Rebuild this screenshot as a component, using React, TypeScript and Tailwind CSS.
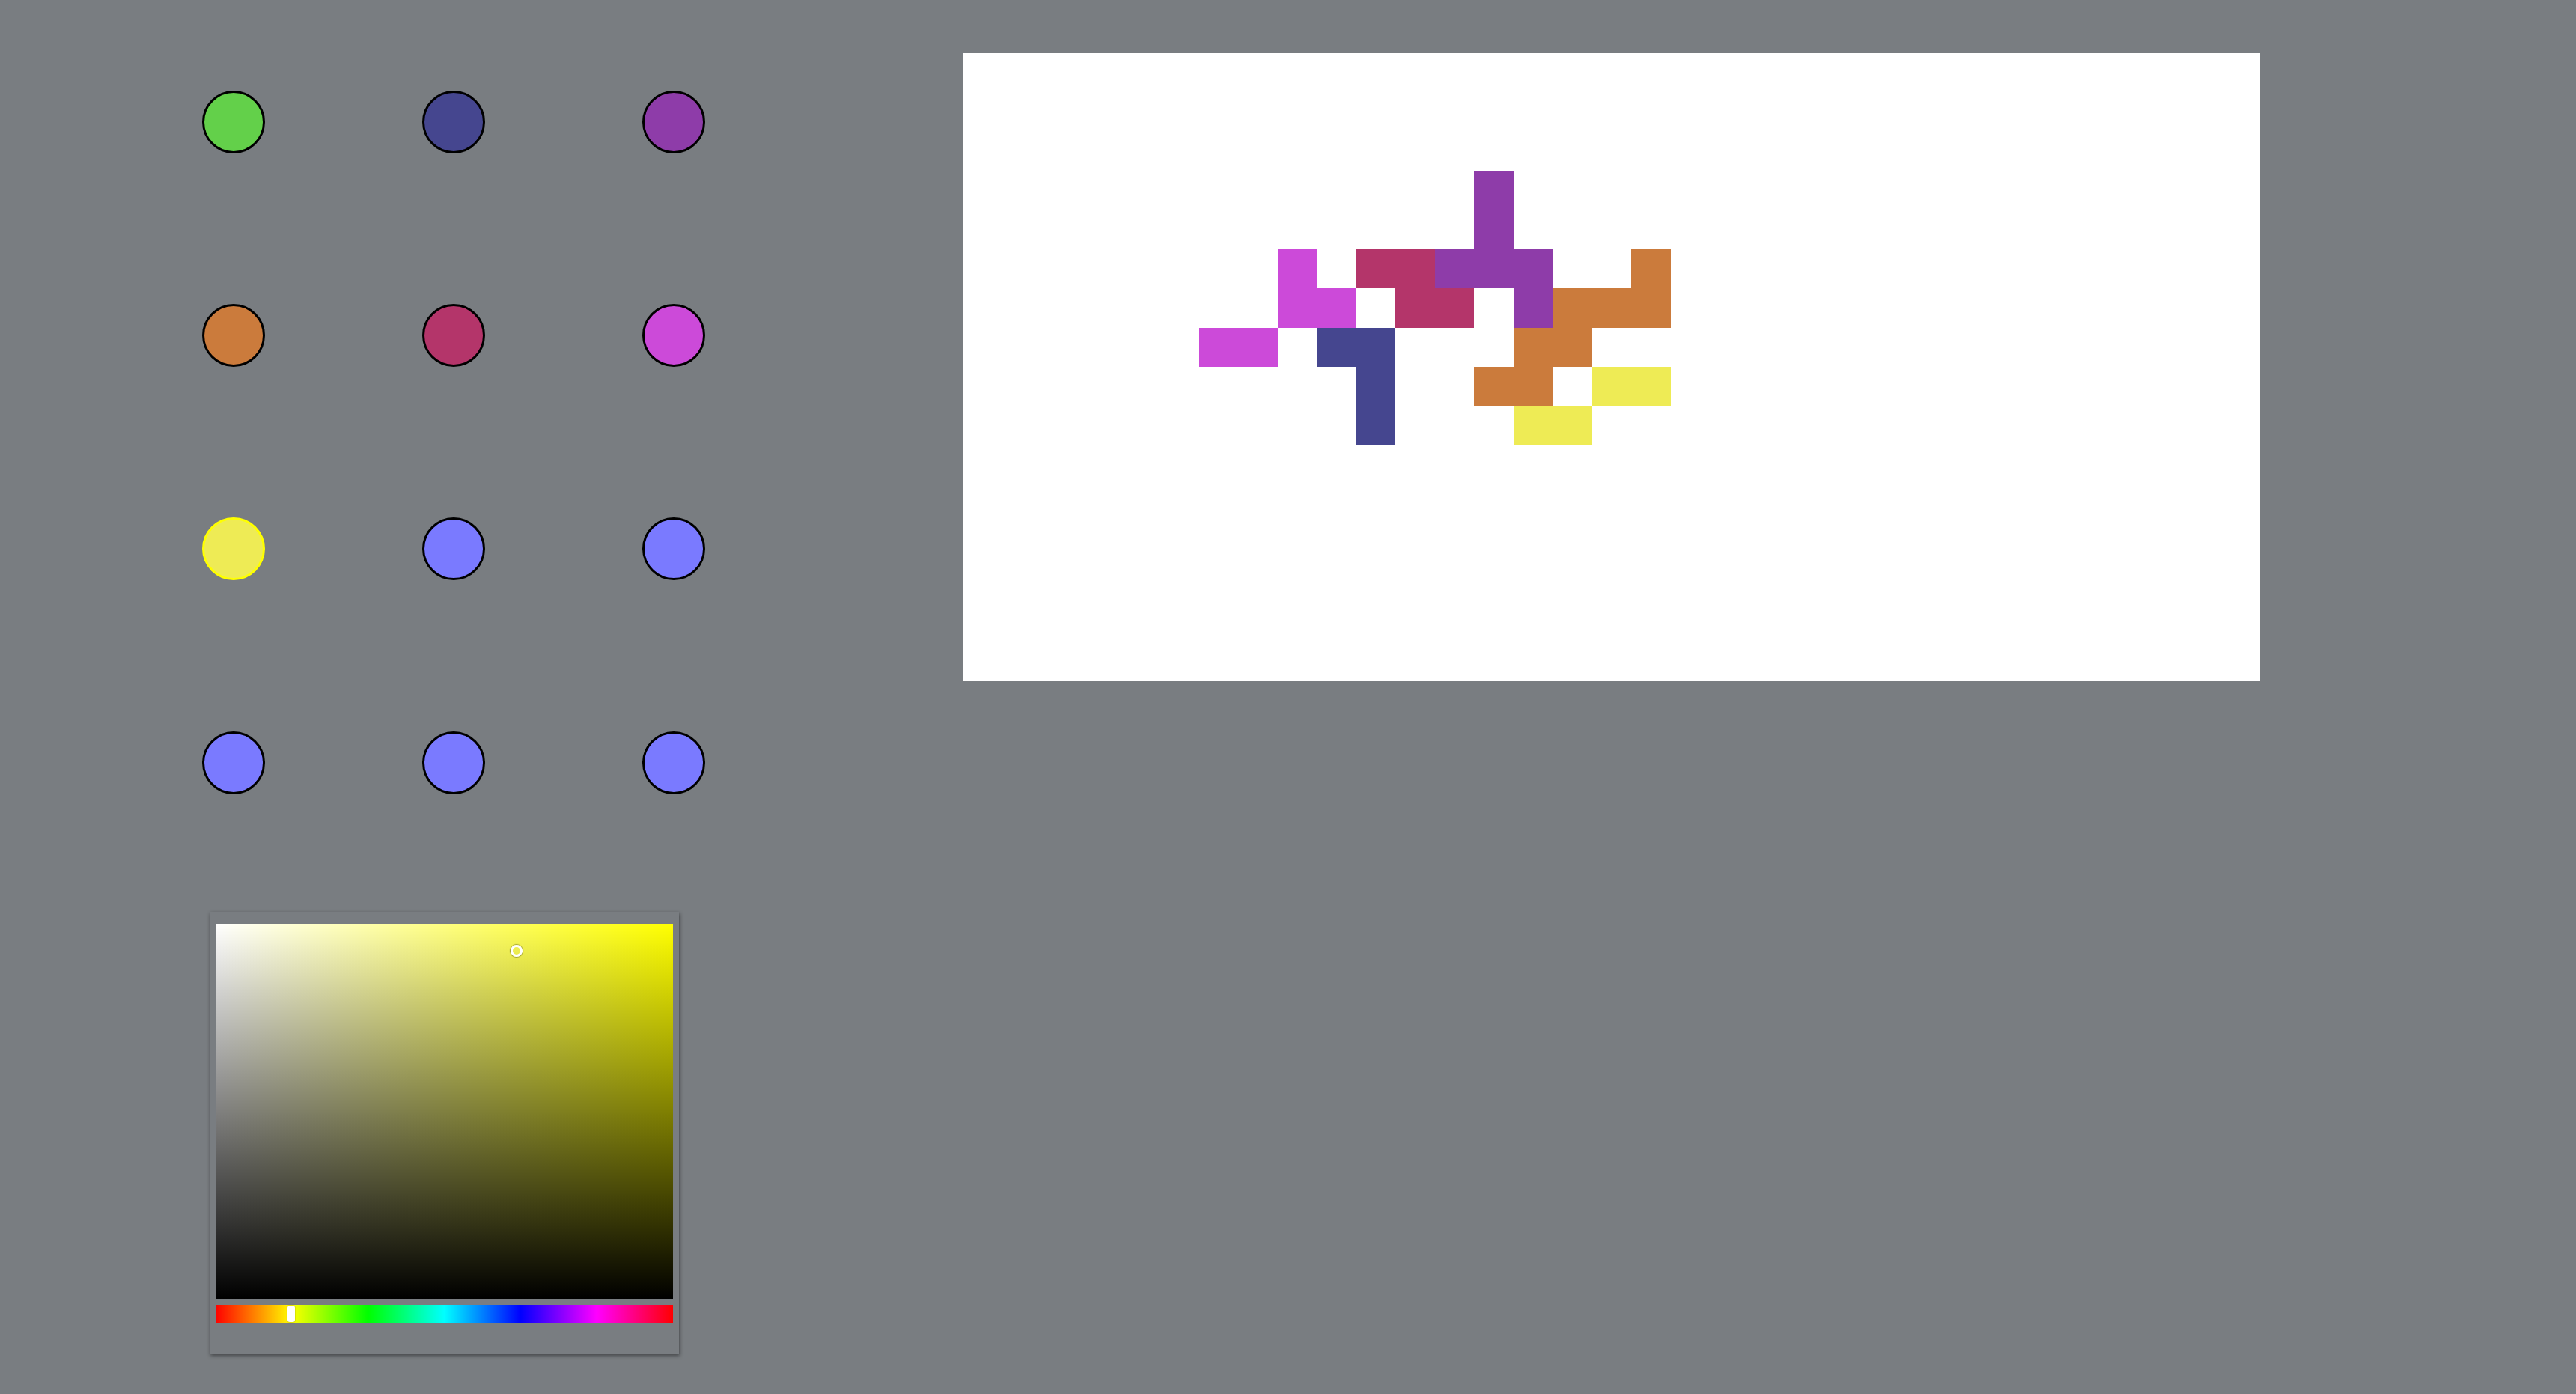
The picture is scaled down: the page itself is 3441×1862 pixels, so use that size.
const palette = [
  { color: "bg-[#63d04a]", selected: false },
  { color: "bg-[#45468f]", selected: false },
  { color: "bg-[#8e3ca9]", selected: false },
  { color: "bg-[#cb7b3c]", selected: false },
  { color: "bg-[#b4356a]", selected: false },
  { color: "bg-[#cc4ad9]", selected: false },
  { color: "bg-[#eeeb55]", selected: true },
  { color: "bg-[#7a7aff]", selected: false },
  { color: "bg-[#7a7aff]", selected: false },
  { color: "bg-[#7a7aff]", selected: false },
  { color: "bg-[#7a7aff]", selected: false },
  { color: "bg-[#7a7aff]", selected: false },
];

const COLS = 33;
const ROWS = 16;

// painted cells on the canvas, [col, row]
const pieces: { color: string; cells: [number, number][] }[] = [
  {
    color: "bg-[#8e3ca9]",
    cells: [[13, 3], [13, 4], [12, 5], [13, 5], [14, 5], [14, 6]],
  },
  {
    color: "bg-[#b4356a]",
    cells: [[10, 5], [11, 5], [11, 6], [12, 6]],
  },
  {
    color: "bg-[#cc4ad9]",
    cells: [[8, 5], [8, 6], [9, 6], [6, 7], [7, 7]],
  },
  {
    color: "bg-[#45468f]",
    cells: [[9, 7], [10, 7], [10, 8], [10, 9]],
  },
  {
    color: "bg-[#cb7b3c]",
    cells: [[17, 5], [15, 6], [16, 6], [17, 6], [14, 7], [15, 7], [13, 8], [14, 8]],
  },
  {
    color: "bg-[#eeeb55]",
    cells: [[16, 8], [17, 8], [14, 9], [15, 9]],
  },
];

const cellColor = new Map<string, string>();
pieces.forEach((p) => p.cells.forEach(([c, r]) => cellColor.set(`${c}-${r}`, p.color)));

function Swatch({ color, selected }: { color: string; selected: boolean }) {
  return (
    <div className="flex items-center justify-center">
      <div
        className={`w-[84px] h-[84px] rounded-full border-[3px] ${color} ${
          selected ? "border-[#ffff00]" : "border-black"
        }`}
      />
    </div>
  );
}

function ColorPicker() {
  return (
    <div className="w-[627px] h-[591px] bg-[#797d81] shadow-[1px_2px_5px_rgba(0,0,0,0.45)] px-[8px] pt-[16px]">
      <div className="relative w-[611px] h-[501px] bg-[linear-gradient(to_right,#ffffff,#ffff00)]">
        <div className="absolute inset-0 bg-[linear-gradient(to_top,#000000,rgba(0,0,0,0))]" />
        <div className="absolute left-[394px] top-[28px] w-[16px] h-[16px] rounded-full border-[3px] border-white shadow-[0_0_1px_1px_rgba(0,0,0,0.35)]" />
      </div>
      <div className="relative mt-[8px] w-[611px] h-[24px] bg-[linear-gradient(to_right,#ff0000,#ffff00,#00ff00,#00ffff,#0000ff,#ff00ff,#ff0000)]">
        <div className="absolute left-[96px] top-[1px] w-[10px] h-[22px] rounded-[3px] bg-white shadow-[0_0_2px_rgba(0,0,0,0.4)]" />
      </div>
    </div>
  );
}

function Canvas() {
  const cells = [];
  for (let r = 0; r < ROWS; r++) {
    for (let c = 0; c < COLS; c++) {
      const color = cellColor.get(`${c}-${r}`) ?? "bg-white";
      cells.push(<div key={`${c}-${r}`} className={color} />);
    }
  }
  return (
    <div className="w-[1732px] h-[838px] bg-white grid grid-cols-[repeat(33,1fr)] grid-rows-[repeat(16,1fr)]">
      {cells}
    </div>
  );
}

export default function App() {
  return (
    <div className="min-h-screen w-full bg-[#797d81] flex items-start">
      <div className="flex flex-col pt-[20px] w-[1047px] shrink-0">
        <div className="ml-[165px] grid grid-cols-[repeat(3,294px)] auto-rows-[285.3px]">
          {palette.map((p, i) => (
            <Swatch key={i} color={p.color} selected={p.selected} />
          ))}
        </div>
        <div className="ml-[280px] mt-[57px]">
          <ColorPicker />
        </div>
      </div>
      <div className="ml-[240px] mt-[71px]">
        <Canvas />
      </div>
    </div>
  );
}
